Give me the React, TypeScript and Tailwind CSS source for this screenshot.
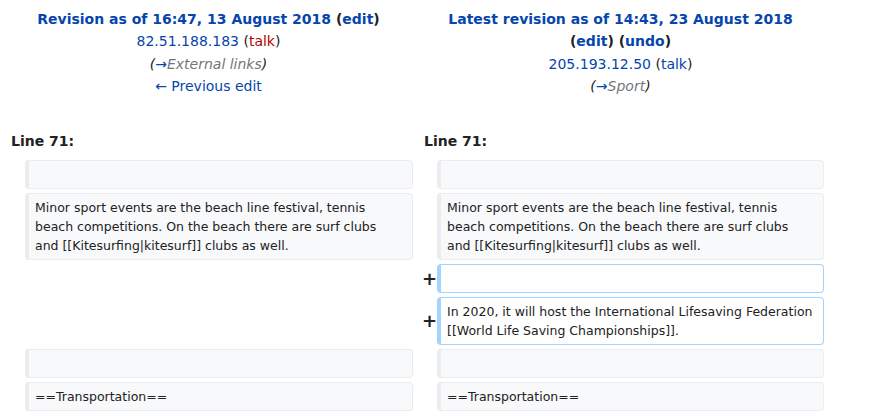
import type { ReactNode } from "react";

type DiffRow =
  | { kind: "context"; text: string[] }
  | { kind: "added"; text: string[] };

// lines are kept as they wrap in the diff view
const rows: DiffRow[] = [
  { kind: "context", text: [] },
  {
    kind: "context",
    text: [
      "Minor sport events are the beach line festival, tennis",
      "beach competitions. On the beach there are surf clubs",
      "and [[Kitesurfing|kitesurf]] clubs as well."
    ]
  },
  { kind: "added", text: [] },
  {
    kind: "added",
    text: ["In 2020, it will host the International Lifesaving Federation", "[[World Life Saving Championships]]."]
  },
  { kind: "context", text: [] },
  { kind: "context", text: ["==Transportation=="] }
];

function Link({ children, red = false }: { children: ReactNode; red?: boolean }) {
  return <a className={red ? "text-[#ba0000]" : "text-[#0645ad]"}>{children}</a>;
}

function LineBox({ added, text }: { added: boolean; text: string[] }) {
  return (
    <div
      className={
        added
          ? "overflow-hidden rounded-[4px] border border-l-4 border-[#a3d3ff] bg-white py-[4px] pl-[6px] pr-[8px] text-[12.5px] leading-[19px] text-[#222]"
          : "overflow-hidden rounded-[4px] border border-l-4 border-[#eaecf0] bg-[#f8f9fa] py-[4px] pl-[6px] pr-[8px] text-[12.5px] leading-[19px] text-[#222]"
      }
    >
      {text.length === 0 ? (
        <span>&nbsp;</span>
      ) : (
        text.map((t) => (
          <div key={t} className="whitespace-nowrap">
            {t}
          </div>
        ))
      )}
    </div>
  );
}

export default function App() {
  return (
    <div className="min-h-[416px] bg-white pl-[4px] pt-[4px] font-['DejaVu_Sans',sans-serif] text-[14px] leading-[22.4px] text-[#222]">
      <div className="grid w-[808px] grid-cols-[17px_388px_16px_387px] gap-x-[4px] gap-y-[4px]">
        <div className="col-span-2 pt-[4px] text-center">
          <div className="font-bold">
            <Link>Revision as of 16:47, 13 August 2018</Link> (<Link>edit</Link>)
          </div>
          <div>
            <Link>82.51.188.183</Link> (<Link red>talk</Link>)
          </div>
          <div className="italic">
            (<Link>→</Link>
            <span className="text-[#72777d]">External links</span>)
          </div>
          <div>
            <Link>← Previous edit</Link>
          </div>
        </div>
        <div className="col-span-2 pt-[4px] text-center">
          <div className="font-bold">
            <Link>Latest revision as of 14:43, 23 August 2018</Link>
            <br />
            (<Link>edit</Link>) (<Link>undo</Link>)
          </div>
          <div>
            <Link>205.193.12.50</Link> (<Link>talk</Link>)
          </div>
          <div className="italic">
            (<Link>→</Link>
            <span className="text-[#72777d]">Sport</span>)
          </div>
        </div>

        <div className="col-span-2 pb-[4px] pl-[7px] pt-[28px] font-bold">Line 71:</div>
        <div className="col-span-2 pb-[4px] pl-[7px] pt-[28px] font-bold">Line 71:</div>

        {rows.map((row, i) =>
          row.kind === "context" ? (
            <div key={i} className="contents">
              <div />
              <LineBox added={false} text={row.text} />
              <div />
              <LineBox added={false} text={row.text} />
            </div>
          ) : (
            <div key={i} className="contents">
              <div />
              <div />
              <div className="-mr-[4px] flex items-center justify-end text-[18px] font-bold leading-none">+</div>
              <LineBox added text={row.text} />
            </div>
          )
        )}
      </div>
    </div>
  );
}
